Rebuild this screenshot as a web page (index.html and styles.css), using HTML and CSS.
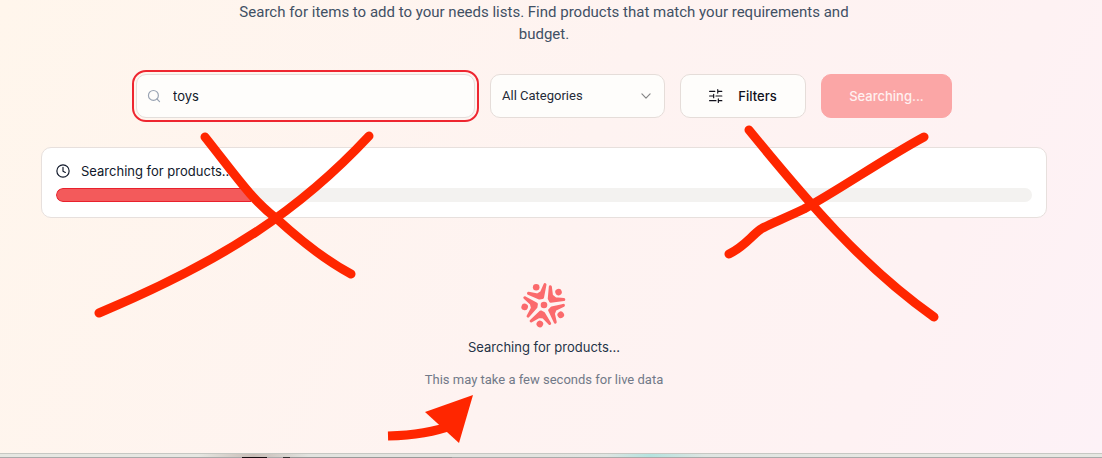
FILE: index.html
```html
<!DOCTYPE html>
<html lang="en">
<head>
<meta charset="utf-8">
<title>Product search</title>
<link rel="stylesheet" href="styles.css">
</head>
<body>
<div class="page">
  <main class="content">
    <p class="intro">Search for items to add to your needs lists. Find products that match your requirements and budget.</p>
    <form class="search">
      <label class="field">
        <svg class="icon" viewBox="0 0 24 24" aria-hidden="true"><circle cx="11" cy="11" r="8.5"/><path d="m21.5 21.5-4.4-4.4"/></svg>
        <input type="text" value="toys" aria-label="Search products">
      </label>
      <div class="category">
        <select aria-label="Category"><option>All Categories</option></select>
        <svg class="icon chevron" viewBox="0 0 24 24" aria-hidden="true"><path d="m5 8.5 7 7 7-7"/></svg>
      </div>
      <button class="button filters" type="button">
        <svg class="icon" viewBox="0 0 24 24" aria-hidden="true"><path d="M22 4h-7M10 4H1M22 12h-10M8 12H1M22 20h-6M12 20H1M15 1v6M8 9v6M16 17v6"/></svg>
        Filters
      </button>
      <button class="button submit" type="submit" disabled>Searching...</button>
    </form>
    <section class="card">
      <div class="status">
        <svg class="icon" viewBox="0 0 24 24" aria-hidden="true"><circle cx="12" cy="12" r="10.5"/><path d="M12 5.500v7l4 2"/></svg>
        <span>Searching for products...</span>
      </div>
      <div class="track"><div class="fill" style="width: 20%"></div></div>
    </section>
    <section class="loading">
      <svg class="logo" viewBox="0 0 48 48" aria-hidden="true">
        <defs><g id="person"><circle cx="16.200" cy="6.200" r="3.300"/><path d="M25 3.500 22.500 16.500 19.500 17 8.500 12.300 17.500 14 21.500 11.500Z" stroke="currentColor" stroke-width="3" stroke-linejoin="round"/></g></defs>
        <circle cx="24" cy="24" r="3.300"/>
        <use href="#person"/><use href="#person" transform="rotate(72 24 24)"/><use href="#person" transform="rotate(144 24 24)"/><use href="#person" transform="rotate(216 24 24)"/><use href="#person" transform="rotate(288 24 24)"/>
      </svg>
      <p class="title">Searching for products...</p>
      <p class="note">This may take a few seconds for live data</p>
    </section>
  </main>
  <footer class="edge"><div class="dock"></div><div class="strip"></div></footer>
  <svg class="marks" viewBox="0 0 1102 458" aria-hidden="true">
    <path d="M205 137C236 176 251 199 277 219C300 240 325 260 351 274"/>
    <path d="M369 136C300 210 225 260 99 313"/>
    <path d="M749 130C807 201 862 266 934 317"/>
    <path d="M924 137C885 158 839 190 804 209C781 220 769 224 761 229C750 237 745 246 729 254"/>
    <path class="shaft" d="M388 436Q427 435 453 425"/>
    <path class="head" d="M473 395 425 412 459 443Z"/>
  </svg>
</div>
</body>
</html>
```
FILE: styles.css
```css
* { box-sizing: border-box; }
body { margin: 0; font-family: Inter, "Liberation Sans", sans-serif; font-size: 13px; line-height: 20px; color: #10182a; }
p { margin: 0; }
.page { position: relative; display: flex; flex-direction: column; min-height: 100vh; overflow: hidden; background: linear-gradient(115deg, #fff6ec, #fef3f1 50%, #fef2f3 80%, #fdf2f7); }
.content { flex: 1; padding: 1px 55px 0 41px; }
.intro { max-width: 640px; margin: 0 auto; font-family: Roboto, "Liberation Sans", sans-serif; font-size: 15px; line-height: 22px; text-align: center; color: #415064; }
.search { display: flex; gap: 15px; max-width: 816px; margin: 29px auto 0; }
.icon { width: 14px; height: 14px; flex: none; fill: none; stroke: currentColor; stroke-width: 2; stroke-linecap: round; stroke-linejoin: round; }
.field { flex: 1; display: flex; align-items: center; gap: 12px; height: 44px; padding: 0 10px; border: 1px solid #e3dfdc; border-radius: 10px; background: #fefdfb; color: #99a3b3; outline: 2px solid #ee2630; outline-offset: 2px; }
.field input { flex: 1; min-width: 0; padding: 0; border: 0; outline: 0; background: none; font: inherit; color: #10182a; }
.category { position: relative; display: flex; width: 175px; }
.category select { width: 100%; height: 44px; padding: 0 11px; appearance: none; border: 1px solid #e5ddd9; border-radius: 10px; background: #fefdfb; font: inherit; font-family: Roboto, "Liberation Sans", sans-serif; color: #252b38; }
.chevron { position: absolute; right: 12px; top: 15px; color: #858585; pointer-events: none; }
.button { display: flex; align-items: center; justify-content: center; gap: 15px; height: 44px; border: 1px solid #e5ddd9; border-radius: 10px; font: inherit; font-weight: 500; }
.filters { width: 126px; background: #fefdfb; color: #10101a; }
.submit { width: 131px; border-color: #fba6a6; background: #fba6a6; color: #fff1f1; }
.card { margin-top: 29px; padding: 13px 14px 15px; border: 1px solid #e7e0dd; border-radius: 10px; background: #fff; }
.status { display: flex; align-items: center; gap: 11px; }
.track { height: 14px; margin-top: 7px; border-radius: 7px; overflow: hidden; background: #f3f2f0; }
.fill { height: 100%; border: 1px solid #e9212d; border-right: 0; border-radius: 7px 0 0 7px; background: #f35a5b; }
.loading { display: flex; flex-direction: column; align-items: center; padding-top: 63px; }
.logo { width: 48px; height: 48px; color: #fb6a6c; fill: currentColor; }
.title { margin-top: 8px; color: #253347; }
.note { margin-top: 13px; font-family: Roboto, "Liberation Sans", sans-serif; color: #717988; }
.edge { border-top: 1px solid #c6c8c3; }
.dock { height: 3px; background: linear-gradient(90deg, #e6e7e2 0 18%, #c9beb8 23%, #e2e3df 28% 50%, #dfe5e2 55%, #b5e3df 59%, #dfe5e2 64%, #e6e7e2 80%); }
.strip { height: 1px; background: linear-gradient(90deg, #aaa 0 22%, #171013 22% 24.200%, #aaa 24.200% 25.700%, #333 25.700% 26.300%, #999 26.300% 41%, #aaa 41%); }
.marks { position: absolute; top: 0; left: 0; width: 1102px; height: 458px; pointer-events: none; fill: none; stroke: #ff2600; stroke-width: 9; stroke-linecap: round; stroke-linejoin: round; }
.shaft { stroke-linecap: butt; }
.head { fill: #ff2600; stroke: none; }
```
